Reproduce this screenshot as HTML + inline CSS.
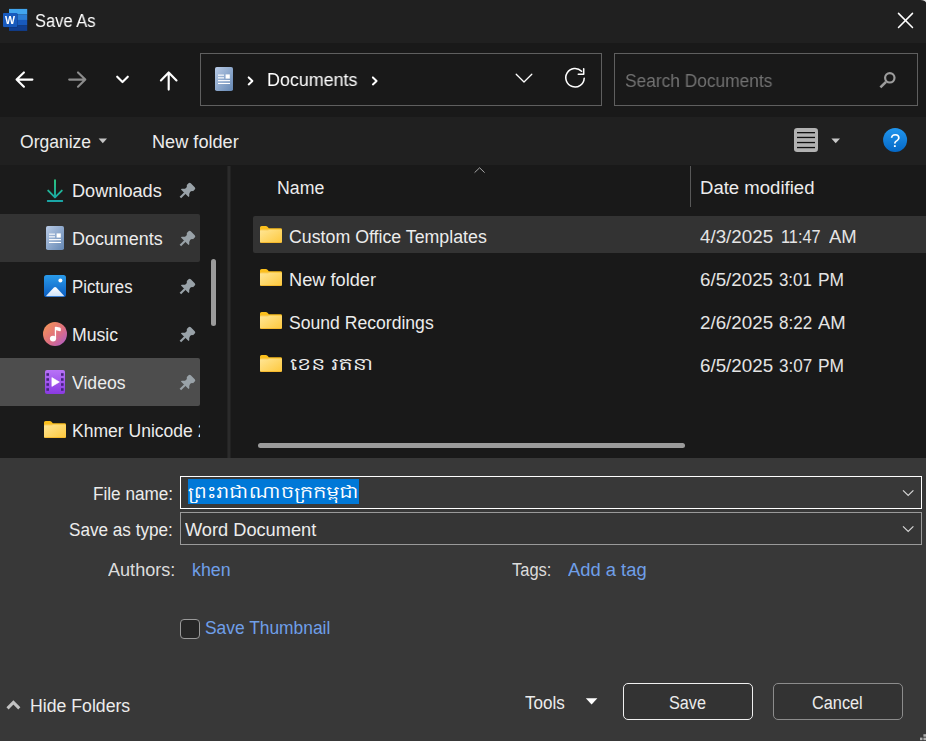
<!DOCTYPE html>
<html lang="en">
<head>
<meta charset="utf-8">
<title>Save As</title>
<style>
*{box-sizing:border-box;margin:0;padding:0}
html,body{width:926px;height:741px;overflow:hidden;background:#191919}
body{position:relative;font-family:"Liberation Sans","Noto Sans Khmer UI","Noto Sans Khmer",sans-serif;font-size:18px;color:#fff}
.abs,.t,.bx,.ic{position:absolute}
.ic{left:0;top:0;width:926px;height:741px;pointer-events:none}
.t{white-space:nowrap;line-height:22px;height:22px;transform-origin:0 50%;color:#ececec}
.km{font-family:"Koh Santepheap","Noto Sans Khmer UI","Noto Sans Khmer","Liberation Sans",sans-serif;font-size:17px;transform:scaleX(1.268)}
.lk{color:#6f9fe8}
.gs{will-change:transform;color:#fff}
.dt{color:#e4e4e4}
#title{left:0;top:0;width:926px;height:43px;background:#202020}
#nav{left:0;top:43px;width:926px;height:74px;background:#191919}
#tool{left:0;top:117px;width:926px;height:48px;background:#202020}
#main{left:0;top:165px;width:926px;height:293px;background:#191919}
#bot{left:0;top:458px;width:926px;height:283px;background:#383838}
.bx{border:1px solid #5f5f5f}
#clip{left:0;top:406px;width:200px;height:52px;overflow:hidden}
/*FIT*/
#t_title{left:35.00px !important;top:10.00px !important;transform:scaleX(0.9169)}
#t_addr{left:267.00px !important;top:69.00px !important;transform:scaleX(0.9935)}
#t_search{left:625.00px !important;top:70.00px !important;transform:scaleX(0.9630)}
#t_org{left:20.00px !important;top:131.00px !important;transform:scaleX(0.9734)}
#t_newf{left:152.00px !important;top:131.00px !important;transform:scaleX(1.0080)}
#t_dl{left:72.00px !important;top:180.00px !important;transform:scaleX(1.0078)}
#t_docs{left:72.00px !important;top:228.00px !important;transform:scaleX(0.9954)}
#t_pic{left:72.00px !important;top:276.00px !important;transform:scaleX(0.9312)}
#t_mus{left:72.00px !important;top:324.00px !important;transform:scaleX(0.9807)}
#t_vid{left:72.00px !important;top:372.00px !important;transform:scaleX(0.9781)}
#t_khm{left:72.00px !important;top:14.00px !important;transform:scaleX(0.9742)}
#t_name{left:277.00px !important;top:177.00px !important;transform:scaleX(0.9838)}
#t_date{left:700.00px !important;top:177.00px !important;transform:scaleX(1.0306)}
#t_f1{left:289.00px !important;top:226.00px !important;transform:scaleX(0.9868)}
#t_f2{left:289.00px !important;top:269.00px !important;transform:scaleX(1.0108)}
#t_f3{left:289.00px !important;top:312.00px !important;transform:scaleX(0.9769)}
#t_d1a{left:700.00px !important;top:226.00px !important;transform:scaleX(1.0432)}
#t_d1b{left:781.00px !important;top:226.00px !important;transform:scaleX(0.9057)}
#t_d1c{left:829.00px !important;top:226.00px !important;transform:scaleX(1.0266)}
#t_d2a{left:700.00px !important;top:269.00px !important;transform:scaleX(1.0421)}
#t_d2b{left:779.00px !important;top:269.00px !important;transform:scaleX(0.9363)}
#t_d2c{left:818.00px !important;top:269.00px !important;transform:scaleX(0.9655)}
#t_d3a{left:700.00px !important;top:312.00px !important;transform:scaleX(1.0431)}
#t_d3b{left:779.00px !important;top:312.00px !important;transform:scaleX(0.9449)}
#t_d3c{left:818.00px !important;top:312.00px !important;transform:scaleX(1.0266)}
#t_d4a{left:700.00px !important;top:355.00px !important;transform:scaleX(1.0434)}
#t_d4b{left:779.00px !important;top:355.00px !important;transform:scaleX(0.9466)}
#t_d4c{left:818.00px !important;top:355.00px !important;transform:scaleX(0.9657)}
#t_fnl{left:93.00px !important;top:483.00px !important;transform:scaleX(0.9521)}
#t_stl{left:69.00px !important;top:519.00px !important;transform:scaleX(0.9524)}
#t_type{left:185.00px !important;top:519.00px !important;transform:scaleX(1.0115)}
#t_auth{left:108.00px !important;top:559.00px !important;transform:scaleX(1.0045)}
#t_khen{left:192.00px !important;top:559.00px !important;transform:scaleX(0.9892)}
#t_tags{left:512.00px !important;top:559.00px !important;transform:scaleX(0.9170)}
#t_addtag{left:568.00px !important;top:559.00px !important;transform:scaleX(1.0200)}
#t_thumb{left:205.00px !important;top:617.00px !important;transform:scaleX(0.9659)}
#t_hide{left:30.00px !important;top:695.00px !important;transform:scaleX(0.9818)}
#t_tools{left:525.00px !important;top:692.00px !important;transform:scaleX(0.9486)}
#t_save{left:669.00px !important;top:692.00px !important;transform:scaleX(0.9009)}
#t_cancel{left:812.00px !important;top:692.00px !important;transform:scaleX(0.9048)}
/*ENDFIT*/
</style>
</head>
<body>
<div id="title" class="abs"></div>
<div id="nav" class="abs"></div>
<div id="tool" class="abs"></div>
<div id="main" class="abs"></div>
<div id="bot" class="abs"></div>

<!-- title bar -->
<div class="t gs" id="t_title" style="left:35px;top:9px">Save As</div>

<!-- nav bar -->
<div class="bx" style="left:200px;top:53px;width:402px;height:53px"></div>
<div class="bx" style="left:614px;top:53px;width:304px;height:53px"></div>
<div class="t gs" id="t_addr" style="left:267px;top:68px">Documents</div>
<div class="t gs" id="t_search" style="left:625px;top:69px;color:#727272">Search Documents</div>

<!-- toolbar -->
<div class="t" id="t_org" style="left:20px;top:130px">Organize</div>
<div class="t" id="t_newf" style="left:152px;top:130px">New folder</div>

<!-- left pane -->
<div id="lp" class="abs" style="left:0;top:165px;width:200px;height:293px;background:#1b1b1b"></div>
<div class="abs" style="left:0;top:214px;width:200px;height:48px;background:#333;border-radius:0 2px 2px 0"></div>
<div class="abs" style="left:0;top:358px;width:200px;height:48px;background:#4d4d4d;border-radius:0 2px 2px 0"></div>
<div class="abs" style="left:211px;top:259px;width:5px;height:67px;background:#9b9b9b;border-radius:3px"></div>
<div class="abs" style="left:227px;top:166px;width:1px;height:292px;background:#232323"></div><div class="abs" style="left:228px;top:166px;width:2px;height:292px;background:#2b2b2b"></div><div class="abs" style="left:230px;top:166px;width:1px;height:292px;background:#222"></div>
<div class="t" id="t_dl" style="left:72px;top:179px">Downloads</div>
<div class="t" id="t_docs" style="left:72px;top:227px">Documents</div>
<div class="t" id="t_pic" style="left:72px;top:275px">Pictures</div>
<div class="t" id="t_mus" style="left:72px;top:323px">Music</div>
<div class="t" id="t_vid" style="left:72px;top:371px">Videos</div>
<div id="clip" class="abs"><div class="t" id="t_khm" style="left:72px;top:13px">Khmer Unicode 2</div></div>

<!-- file list -->
<div class="abs" style="left:253px;top:216px;width:673px;height:37px;background:#333;border-radius:2px 0 0 2px"></div>
<div class="abs" style="left:690px;top:166px;width:1px;height:41px;background:#585858"></div>
<div class="abs" style="left:258px;top:443px;width:427px;height:5px;background:#9b9b9b;border-radius:2.5px"></div>
<div class="t" id="t_name" style="left:277px;top:176px">Name</div>
<div class="t" id="t_date" style="left:700px;top:176px">Date modified</div>
<div class="t" id="t_f1" style="left:289px;top:225px">Custom Office Templates</div>
<div class="t" id="t_f2" style="left:289px;top:268px">New folder</div>
<div class="t" id="t_f3" style="left:289px;top:311px">Sound Recordings</div>
<div class="t km" id="t_f4" style="left:290px;top:353px;transform:scaleX(1.37)">ខេន រតនា</div>
<div class="t dt" id="t_d1a" style="left:700px;top:226px">4/3/2025</div><div class="t dt" id="t_d1b" style="left:780px;top:226px">11:47</div><div class="t dt" id="t_d1c" style="left:819px;top:226px">AM</div>
<div class="t dt" id="t_d2a" style="left:700px;top:269px">6/5/2025</div><div class="t dt" id="t_d2b" style="left:780px;top:269px">3:01</div><div class="t dt" id="t_d2c" style="left:819px;top:269px">PM</div>
<div class="t dt" id="t_d3a" style="left:700px;top:312px">2/6/2025</div><div class="t dt" id="t_d3b" style="left:780px;top:312px">8:22</div><div class="t dt" id="t_d3c" style="left:819px;top:312px">AM</div>
<div class="t dt" id="t_d4a" style="left:700px;top:355px">6/5/2025</div><div class="t dt" id="t_d4b" style="left:780px;top:355px">3:07</div><div class="t dt" id="t_d4c" style="left:819px;top:355px">PM</div>

<!-- bottom -->
<div class="bx" style="left:180px;top:476px;width:742px;height:33px;border-color:#fff"></div>
<div class="bx" style="left:180px;top:512px;width:742px;height:33px;border-color:#9a9a9a;background:#353535"></div>
<div class="abs" style="left:188px;top:479px;width:171px;height:25px;background:#0078d7"></div>
<div class="t km" id="t_fn" style="left:188px;top:481px;color:#fff">ព្រះរាជាណាចក្រកម្ពុជា</div>
<div class="t" id="t_fnl" style="left:93px;top:482px">File name:</div>
<div class="t" id="t_stl" style="left:69px;top:519px">Save as type:</div>
<div class="t" id="t_type" style="left:185px;top:519px">Word Document</div>
<div class="t" id="t_auth" style="left:108px;top:559px;color:#dcdcdc">Authors:</div>
<div class="t lk" id="t_khen" style="left:192px;top:559px">khen</div>
<div class="t" id="t_tags" style="left:512px;top:559px;color:#dcdcdc">Tags:</div>
<div class="t lk" id="t_addtag" style="left:568px;top:559px">Add a tag</div>
<div class="abs" style="left:180px;top:619px;width:20px;height:20px;border:1px solid #9a9a9a;border-radius:4px;background:#272727"></div>
<div class="t lk" id="t_thumb" style="left:205px;top:617px">Save Thumbnail</div>
<div class="t" id="t_hide" style="left:30px;top:695px">Hide Folders</div>
<div class="t" id="t_tools" style="left:525px;top:692px">Tools</div>
<div class="bx" style="left:623px;top:683px;width:130px;height:37px;border-color:#f0f0f0;border-radius:5px;background:#333"></div>
<div class="bx" style="left:773px;top:683px;width:130px;height:37px;border-color:#8c8c8c;border-radius:5px;background:#333"></div>
<div class="t" id="t_save" style="left:669px;top:692px">Save</div>
<div class="t" id="t_cancel" style="left:811px;top:692px">Cancel</div>

<!--ICONS-->
<svg class="ic" width="926" height="741" viewBox="0 0 926 741">
<defs>
<linearGradient id="gDoc" x1="0" y1="0" x2="1" y2="1"><stop offset="0" stop-color="#b9cbe6"/><stop offset="1" stop-color="#6487b3"/></linearGradient>
<linearGradient id="gFold" x1="0" y1="0" x2="1" y2="1"><stop offset="0" stop-color="#ffe696"/><stop offset="1" stop-color="#fdc83c"/></linearGradient>
<linearGradient id="gPic" x1="0" y1="0" x2="0" y2="1"><stop offset="0" stop-color="#2a9bea"/><stop offset="1" stop-color="#0a5cc0"/></linearGradient>
<linearGradient id="gMnt" x1="0" y1="0" x2="0" y2="1"><stop offset="0" stop-color="#ffffff"/><stop offset="1" stop-color="#cfe3fa"/></linearGradient>
<linearGradient id="gMus" x1="0" y1="0" x2="1" y2="1"><stop offset="0" stop-color="#f79a52"/><stop offset="0.55" stop-color="#de6f80"/><stop offset="1" stop-color="#a85bd0"/></linearGradient>
<linearGradient id="gVid" x1="0" y1="0" x2="0" y2="1"><stop offset="0" stop-color="#b873f7"/><stop offset="1" stop-color="#8a3ae2"/></linearGradient>
<linearGradient id="gDl" gradientUnits="userSpaceOnUse" x1="0" y1="180" x2="0" y2="200"><stop offset="0" stop-color="#2ccb86"/><stop offset="1" stop-color="#17a3a8"/></linearGradient>
<linearGradient id="gHelp" x1="0" y1="0" x2="0" y2="1"><stop offset="0" stop-color="#2196ee"/><stop offset="1" stop-color="#0568c6"/></linearGradient>
<g id="folder"><path d="M0 1.6 Q0 0 1.6 0 H5.8 Q6.8 0 7.5 0.8 L8.8 2.2 H20.6 Q22 2.2 22 3.6 V5 H0 Z" fill="#fbbf1c"/><rect x="0" y="3.4" width="22" height="13.6" rx="1.2" fill="url(#gFold)"/><rect x="0" y="3.4" width="8.4" height="0.9" fill="#f5b829" opacity=".75"/><rect x="0.6" y="16.2" width="20.8" height="0.8" rx=".4" fill="#f3b224"/></g>
<g id="doc"><rect x="0" y="0" width="18" height="24" rx="1.8" fill="url(#gDoc)"/><g fill="#fff"><rect x="3" y="7.6" width="6" height="1.1"/><rect x="3" y="10.3" width="6" height="1.1"/><rect x="10.6" y="7.4" width="4.2" height="4.2"/><rect x="3" y="13.1" width="12" height="1.1"/><rect x="3" y="15.9" width="12" height="1.1"/></g></g>
<g id="pin" fill="#99a2a8"><path d="M-1.05 0.3 L1.05 0.3 L1.05 -6.5 L-1.05 -6.5 Z"/><path d="M-5.4 -5.9 L5.4 -5.9 L5.4 -6.9 Q3 -8.6 2.8 -10.6 Q2.9 -12.2 4.4 -13.2 L4.4 -15.6 Q4.4 -17.2 2.8 -17.2 L-2.8 -17.2 Q-4.4 -17.2 -4.4 -15.6 L-4.4 -13.2 Q-2.9 -12.2 -2.8 -10.6 Q-3 -8.6 -5.4 -6.9 Z"/></g>
</defs>

<!-- Word icon -->
<g>
<rect x="9" y="8.9" width="18.2" height="5.6" fill="#41a5ee"/>
<rect x="9" y="14.4" width="18.2" height="5.6" fill="#2b7cd3"/>
<rect x="9" y="19.9" width="18.2" height="5.6" fill="#185abd"/>
<rect x="9" y="25.4" width="18.2" height="5.5" fill="#103f91"/>
<rect x="3.6" y="13.6" width="14.2" height="14" rx="1" fill="#0b2a66" opacity=".55"/>
<rect x="3" y="12.9" width="14.3" height="14" rx="0.9" fill="#185abd"/>
<text x="5" y="24.2" textLength="10" lengthAdjust="spacingAndGlyphs" font-family="Liberation Sans, sans-serif" font-weight="bold" font-size="11.8" fill="#fff">W</text>
</g>
<!-- close -->
<path d="M898.5 13.4 L912.5 27.5 M912.5 13.4 L898.5 27.5" stroke="#fff" stroke-width="1.5" fill="none" stroke-linecap="round"/>
<!-- window corner -->
<path d="M926 0 H920.4 Q925 0.4 926 2.6 Z" fill="#e0e0e0"/>

<!-- nav arrows -->
<g fill="none" stroke-linecap="round" stroke-linejoin="round" stroke-width="2.15">
<path d="M32.4 79.6 H16.6 M23.9 72.5 L16.6 79.6 L23.9 86.7" stroke="#fff"/>
<path d="M69.2 79.6 H85.3 M78 72.5 L85.3 79.6 L78 86.7" stroke="#8c8c8c"/>
<path d="M117.2 76.7 L122.5 82 L127.8 76.7" stroke="#fff"/>
<path d="M168.7 89.6 V72.5 M160.9 80.4 L168.7 72.4 L176.5 80.4" stroke="#fff"/>
<path d="M248.7 77.4 L252.4 80.9 L248.7 84.4" stroke="#fff" stroke-width="2"/>
<path d="M372.9 77.4 L376.6 80.9 L372.9 84.4" stroke="#fff" stroke-width="2"/>
<path d="M516.2 74.2 L524 82 L531.8 74.2" stroke="#fff" stroke-width="1.3"/>
</g>
<!-- address doc icon -->
<use href="#doc" x="215" y="67"/>
<!-- refresh -->
<g fill="none" stroke="#fff" stroke-width="1.55" stroke-linecap="round" stroke-linejoin="round">
<path d="M584.2 78.2 A9.2 9.2 0 1 1 581.6 71.3"/>
<path d="M583.7 68.7 V74.2 H578.3"/>
</g>
<!-- search magnifier -->
<g fill="none" stroke="#9c9c9c">
<circle cx="889.8" cy="77.8" r="4.7" stroke-width="2.2"/>
<path d="M886 81.8 L880.4 87.4" stroke-width="2.6"/>
</g>

<!-- toolbar -->
<path d="M98.6 138.6 H107 L102.8 143.2 Z" fill="#c4c4c4"/>
<rect x="794" y="128" width="24" height="24" rx="3.2" fill="#b2b2b2"/>
<g fill="#101010"><rect x="797" y="132" width="18" height="1.3"/><rect x="797" y="136.8" width="18" height="1.3"/><rect x="797" y="141.9" width="18" height="1.3"/><rect x="797" y="146.9" width="18" height="1.3"/></g>
<path d="M831.4 138.4 H840 L835.7 143.2 Z" fill="#c8c8c8"/>
<circle cx="895.1" cy="140" r="12" fill="url(#gHelp)"/>
<text x="895.1" y="146.6" text-anchor="middle" font-family="Liberation Sans, sans-serif" font-size="18.5" fill="#fff">?</text>

<!-- left pane icons -->
<g fill="none" stroke="url(#gDl)" stroke-width="1.9" stroke-linecap="round" stroke-linejoin="round">
<path d="M55 180.2 V197"/>
<path d="M48.2 190.6 L55 197.4 L61.8 190.6"/>
</g>
<rect x="46.9" y="200.1" width="16.2" height="1.8" rx=".6" fill="#1aa6a6"/>
<use href="#doc" x="46" y="226"/>
<g>
<rect x="44" y="275" width="22" height="22" rx="2.6" fill="url(#gPic)"/>
<path d="M46.2 295.8 L53.9 287.6 Q55.1 286.4 56.3 287.6 L64 295.8 Q64.2 296.2 63.6 296.2 H46.6 Q46 296.2 46.2 295.8 Z" fill="url(#gMnt)"/>
<circle cx="60.4" cy="280.4" r="2" fill="#fff"/>
</g>
<g>
<circle cx="55" cy="334" r="12" fill="url(#gMus)"/>
<ellipse cx="53" cy="338.6" rx="3.1" ry="2.9" fill="#fff"/>
<path d="M54.8 338.6 V327.6 Q54.8 326.4 56 326.7 L59.8 327.6 Q60.8 327.9 60.8 328.9 V330.6 Q60.8 331.4 60 331.2 L56.1 330.3 V338.6 Z" fill="#fff"/>
</g>
<g>
<rect x="45" y="370" width="20" height="24" rx="2" fill="url(#gVid)"/>
<g fill="#45237f"><rect x="46.4" y="373.2" width="2.6" height="2.6"/><rect x="46.4" y="378.2" width="2.6" height="2.6"/><rect x="46.4" y="383.2" width="2.6" height="2.6"/><rect x="46.4" y="388.2" width="2.6" height="2.6"/>
<rect x="61" y="373.2" width="2.6" height="2.6"/><rect x="61" y="378.2" width="2.6" height="2.6"/><rect x="61" y="383.2" width="2.6" height="2.6"/><rect x="61" y="388.2" width="2.6" height="2.6"/></g>
<path d="M51.9 377.6 L59.4 382 L51.9 386.4 Z" fill="#fff" stroke="#fff" stroke-width=".6" stroke-linejoin="round"/>
</g>
<use href="#folder" x="44" y="421"/>
<!-- pins -->
<g><use href="#pin" transform="translate(180.6 197.40) rotate(45)"/><use href="#pin" transform="translate(180.6 245.40) rotate(45)"/><use href="#pin" transform="translate(180.6 293.40) rotate(45)"/><use href="#pin" transform="translate(180.6 341.40) rotate(45)"/><use href="#pin" transform="translate(180.6 389.40) rotate(45)"/></g>

<!-- file list icons -->
<use href="#folder" x="260" y="226"/>
<use href="#folder" x="260" y="269"/>
<use href="#folder" x="260" y="312"/>
<use href="#folder" x="260" y="355"/>
<path d="M474.6 172.6 L479.6 167.8 L484.6 172.6" fill="none" stroke="#a8a8a8" stroke-width="1"/>

<!-- bottom -->
<path d="M903 490.4 L908.2 495.4 L913.4 490.4" fill="none" stroke="#d6d6d6" stroke-width="1.2"/>
<path d="M903 526.4 L908.2 531.4 L913.4 526.4" fill="none" stroke="#d6d6d6" stroke-width="1.2"/>
<path d="M7.5 708.4 L13.4 702.4 L19.3 708.4" fill="none" stroke="#c2c2c2" stroke-width="3"/>
<path d="M585.8 698.2 H597.4 L591.6 704.6 Z" fill="#fff"/>
<g fill="#adadad"><rect x="920" y="737.6" width="2.5" height="2.6"/><rect x="923.4" y="734.2" width="2.6" height="2.5"/><rect x="923.4" y="737.6" width="2.6" height="2.6"/></g>
</svg>
<!--/ICONS-->
</body>
</html>
